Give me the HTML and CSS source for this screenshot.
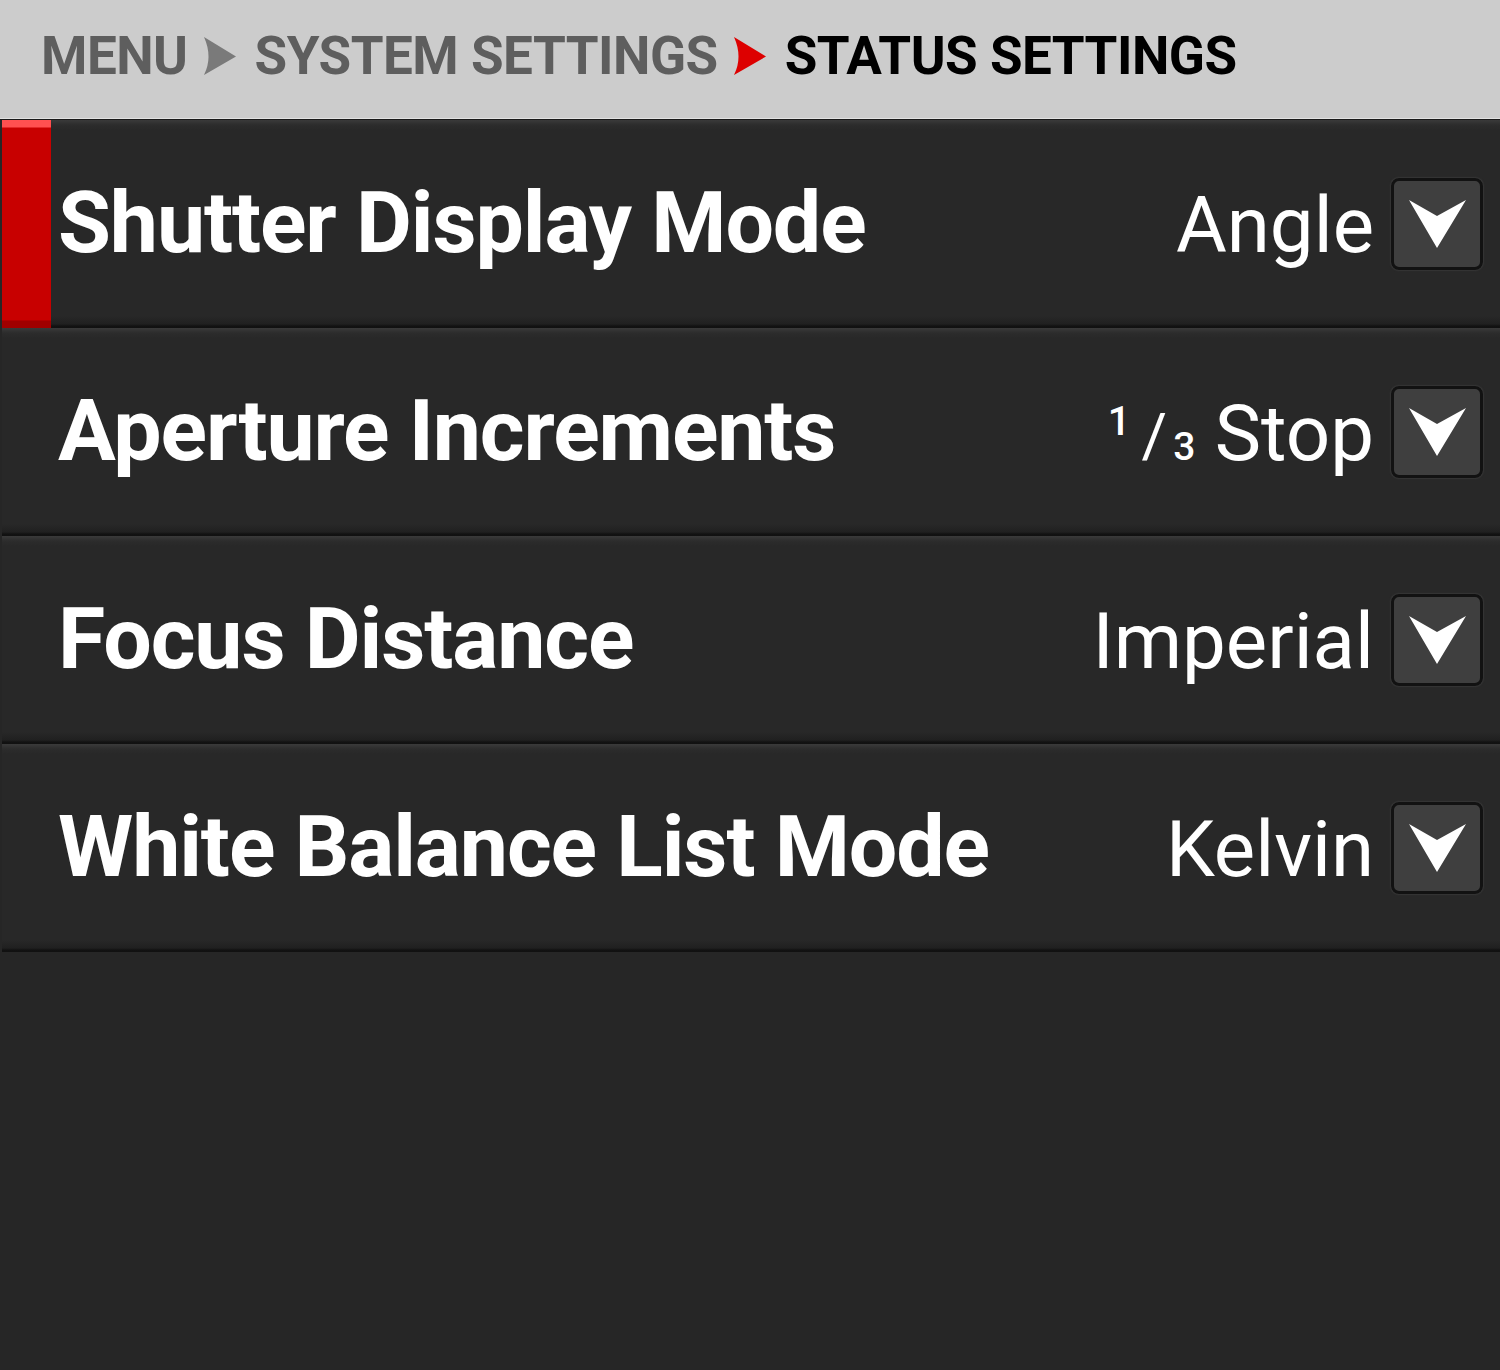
FILE: index.html
```html
<!DOCTYPE html>
<html>
<head>
<meta charset="utf-8">
<link rel="stylesheet" href="styles.css">
</head>
<body>
<header class="crumbs">
  <span class="crumb">MENU</span>
  <svg class="chev" viewBox="0 0 32 39"><path d="M0 0 L32 19.5 L0 38 Q9 20 0 0 Z" fill="#7a7a7a"/></svg>
  <span class="crumb">SYSTEM SETTINGS</span>
  <svg class="chev" viewBox="0 0 32 39"><path d="M0 0 L32 19.5 L0 38 Q9 20 0 0 Z" fill="#dd0000"/></svg>
  <span class="crumb current">STATUS SETTINGS</span>
</header>
<main class="list">
  <div class="row selected">
    <div class="marker"></div>
    <div class="label">Shutter Display Mode</div>
    <div class="value">Angle</div>
    <div class="drop"><svg viewBox="0 0 86 86"><polygon points="15,19 43,35 72,19 43,67" fill="#fff"/></svg></div>
  </div>
  <div class="row">
    <div class="label">Aperture Increments</div>
    <div class="value"><span class="num">1</span><span class="slash">/</span><span class="den">3</span> Stop</div>
    <div class="drop"><svg viewBox="0 0 86 86"><polygon points="15,19 43,35 72,19 43,67" fill="#fff"/></svg></div>
  </div>
  <div class="row">
    <div class="label">Focus Distance</div>
    <div class="value">Imperial</div>
    <div class="drop"><svg viewBox="0 0 86 86"><polygon points="15,19 43,35 72,19 43,67" fill="#fff"/></svg></div>
  </div>
  <div class="row">
    <div class="label">White Balance List Mode</div>
    <div class="value">Kelvin</div>
    <div class="drop"><svg viewBox="0 0 86 86"><polygon points="15,19 43,35 72,19 43,67" fill="#fff"/></svg></div>
  </div>
</main>
</body>
</html>
```
FILE: styles.css
```css
html, body {
  margin: 0;
  padding: 0;
}
body {
  width: 1500px;
  height: 1370px;
  background: #262626;
  font-family: Roboto, "Liberation Sans", sans-serif;
  overflow: hidden;
}
.crumbs {
  height: 119px;
  box-sizing: border-box;
  background: #cccccc;
  border-bottom: 1px solid #e2e2e2;
  display: flex;
  align-items: center;
  padding-left: 41px;
  padding-bottom: 6px;
}
.crumb {
  font-size: 53px;
  font-weight: 700;
  color: #5e5e5e;
  line-height: 1;
  letter-spacing: -0.5px;
}
.crumb.current {
  color: #000;
}
.chev {
  width: 32px;
  height: 39px;
  margin: 0 19px 0 16px;
}
.list {
  border-top: 1px solid #1a1a1a;
  padding-left: 2px;
}
.row {
  height: 208px;
  display: flex;
  align-items: center;
  background: linear-gradient(to bottom, #3a3a3a 0, #2c2c2c 5px, #282828 10px, #282828 196px, #202020 204px, #121212 206px, #111 208px);
  position: relative;
  padding-left: 56px;
  padding-right: 17px;
}
.marker {
  position: absolute;
  left: 0;
  top: 0;
  width: 49px;
  height: 208px;
  background: linear-gradient(to bottom, #ff5050 0, #ff5050 7px, #c80000 8px, #c80000 200px, #a00000 201px, #a00000 208px);
}
.label {
  flex: 1;
  color: #fff;
  font-size: 86px;
  font-weight: 700;
  line-height: 1;
  letter-spacing: -1.1px;
  padding-bottom: 2px;
}
.value {
  color: #fff;
  font-size: 78px;
  font-weight: 400;
  line-height: 1;
  margin-right: 17px;
  padding-top: 4px;
  white-space: nowrap;
}
.num {
  font-size: 40px;
  font-weight: 500;
  vertical-align: 25px;
  margin-right: 11px;
}
.slash {
  font-size: 62px;
  font-weight: 400;
  vertical-align: 3px;
  margin-right: 6px;
}
.den {
  font-size: 39px;
  font-weight: 500;
}
.drop {
  width: 86px;
  height: 86px;
  border: 3px solid #121212;
  border-radius: 8px;
  background: #3f3f3f;
  box-shadow: 0 0 2px #555;
}
.drop svg {
  display: block;
  width: 86px;
  height: 86px;
}
```
